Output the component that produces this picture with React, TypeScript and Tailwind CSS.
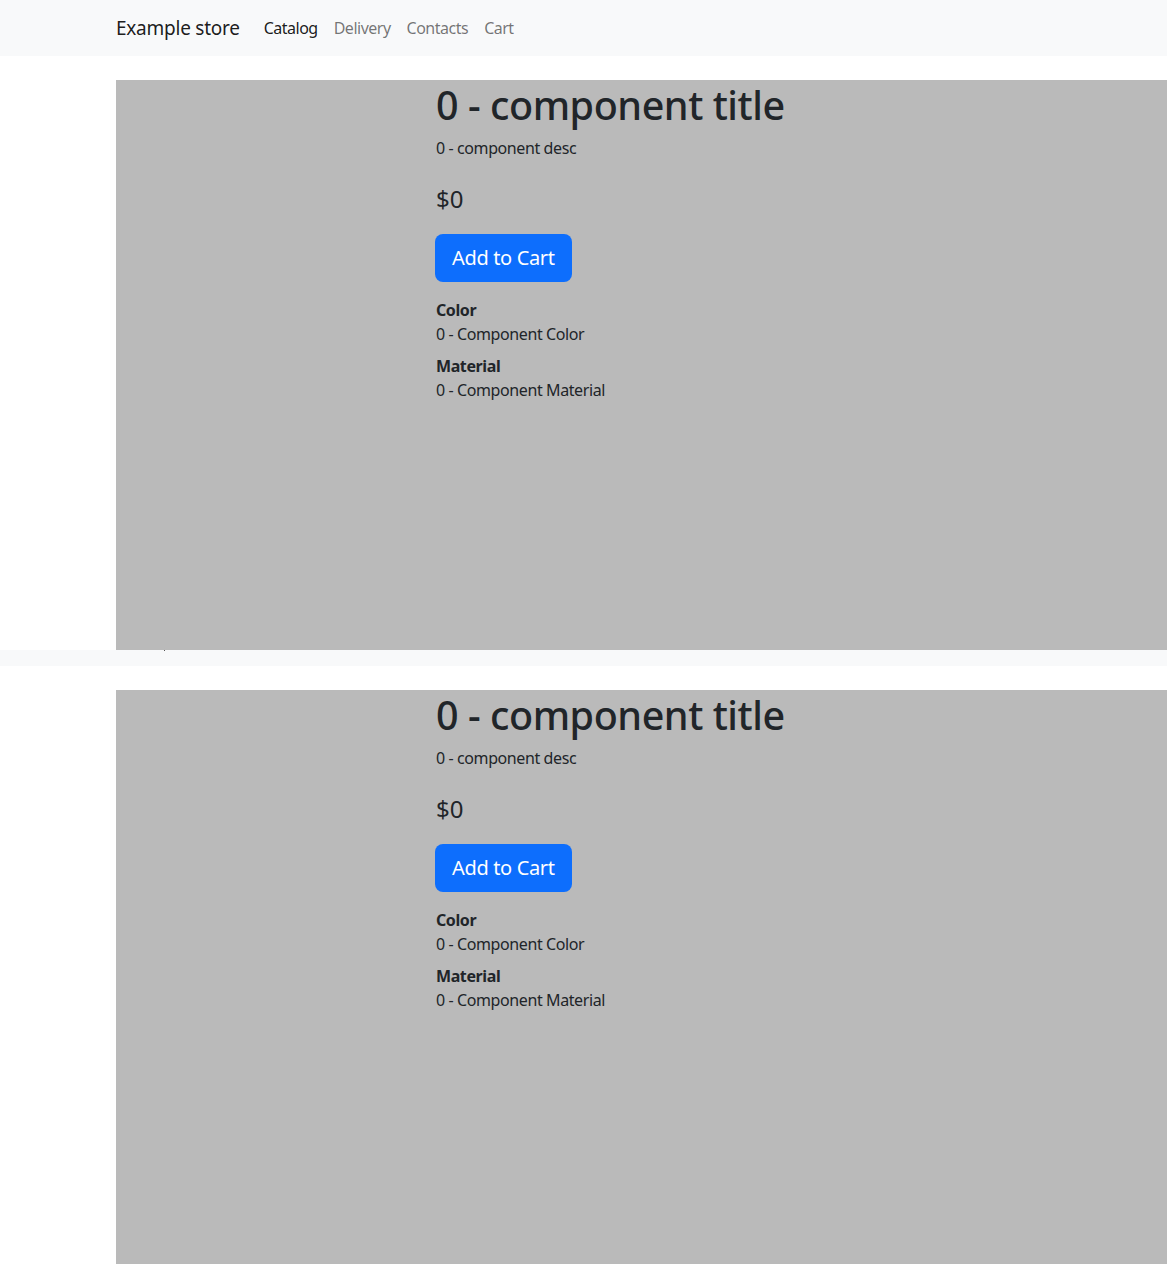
import React from 'react';

const links = ['Catalog', 'Delivery', 'Contacts', 'Cart'];

const Product: React.FC = () => {
  return (
    <div className="flex bg-[#bababa] text-[#212529]">
      <div className="w-[320px] shrink-0"></div>
      <div className="flex flex-col items-start tracking-[-0.4px]">
        <h1 className="pt-[2px] text-[39.5px] leading-[47px] font-medium tracking-[-0.45px]">0 - component title</h1>
        <p className="mt-[7px] text-[16px] leading-6">0 - component desc</p>
        <div className="mt-6 text-[24px] leading-[29px] tracking-normal">$0</div>
        <button className="mt-[21px] -ml-px h-12 px-[17px] rounded-lg bg-[#0d6efd] text-white text-[20px] leading-[30px] tracking-[-0.35px]">
          Add to Cart
        </button>
        <div className="mt-4 font-bold text-[16px] leading-6">Color</div>
        <div className="text-[16px] leading-6">0 - Component Color</div>
        <div className="mt-2 font-bold text-[16px] leading-6">Material</div>
        <div className="text-[16px] leading-6">0 - Component Material</div>
      </div>
    </div>
  );
};

const App: React.FC = () => {
  return (
    <div className="min-h-screen bg-white font-['Noto_Sans',sans-serif] overflow-hidden">
      {/* navbar */}
      <nav className="h-14 bg-[#f8f9fa] flex items-center pl-[116px]">
        <span className="text-[19px] leading-[30px] tracking-[-0.25px] text-[#000000e6] mr-4">Example store</span>
        <ul className="flex tracking-[-0.5px]">
          {links.map((l, i) => (
            <li
              key={l}
              className={`px-2 text-[16px] leading-6 ${i === 0 ? 'text-[#000000e6]' : 'text-[#0000008c]'}`}
            >
              {l}
            </li>
          ))}
        </ul>
      </nav>

      <div className="mt-6 ml-[116px] h-[570px] flex flex-col">
        <Product />
        <div className="flex-1 bg-[#bababa]"></div>
      </div>

      {/* strip */}
      <div className="h-4 bg-[#f8f9fa] pl-[164px]">
        <div className="w-px h-px bg-[#555]"></div>
      </div>

      <div className="mt-6 ml-[116px] h-[574px] flex flex-col">
        <Product />
        <div className="flex-1 bg-[#bababa]"></div>
      </div>
    </div>
  );
};

export default App;
